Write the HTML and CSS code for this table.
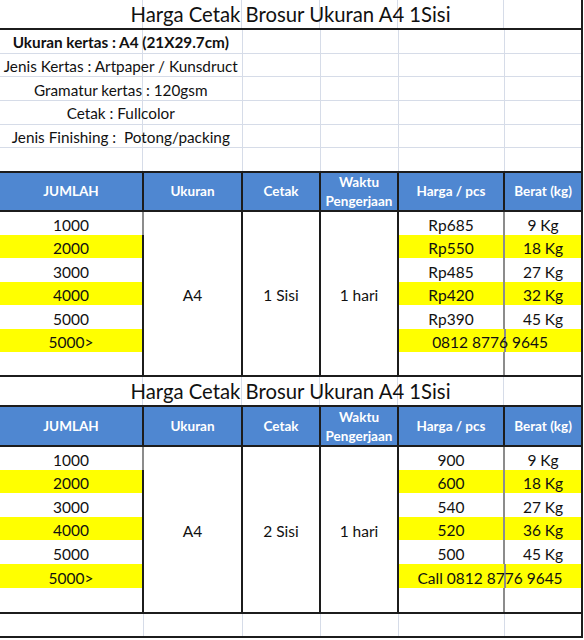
FILE: index.html
```html
<!DOCTYPE html>
<html lang="id">
<head>
<meta charset="utf-8">
<title>Harga Cetak Brosur Ukuran A4</title>
<link rel="stylesheet" href="styles.css">
</head>
<body>
<table class="sheet">
  <colgroup>
    <col class="c-qty"><col class="c-size"><col class="c-print"><col class="c-time"><col class="c-price"><col class="c-weight">
  </colgroup>
  <tbody>
    <tr><td colspan="6" class="title">Harga Cetak Brosur Ukuran A4 1Sisi</td></tr>
    <tr class="info-row"><td colspan="2" class="info strong">Ukuran kertas : A4 (21X29.7cm)</td><td class="grid"></td><td class="grid"></td><td class="grid"></td><td class="grid end"></td></tr>
    <tr class="info-row"><td colspan="2" class="info">Jenis Kertas : Artpaper / Kunsdruct</td><td class="grid"></td><td class="grid"></td><td class="grid"></td><td class="grid end"></td></tr>
    <tr class="info-row"><td colspan="2" class="info">Gramatur kertas : 120gsm</td><td class="grid"></td><td class="grid"></td><td class="grid"></td><td class="grid end"></td></tr>
    <tr class="info-row"><td colspan="2" class="info">Cetak : Fullcolor</td><td class="grid"></td><td class="grid"></td><td class="grid"></td><td class="grid end"></td></tr>
    <tr class="info-row"><td colspan="2" class="info">Jenis Finishing :&nbsp; Potong/packing</td><td class="grid"></td><td class="grid"></td><td class="grid"></td><td class="grid end"></td></tr>
    <tr class="info-row"><td colspan="2" class="info"></td><td class="grid"></td><td class="grid"></td><td class="grid"></td><td class="grid end"></td></tr>

    <tr class="head-row"><th class="first">JUMLAH</th><th>Ukuran</th><th>Cetak</th><th>Waktu<br>Pengerjaan</th><th>Harga / pcs</th><th class="end">Berat (kg)</th></tr>
    <tr class="data-row top"><td class="qty">1000</td><td rowspan="7" class="merged">A4</td><td rowspan="7" class="merged">1 Sisi</td><td rowspan="7" class="merged">1 hari</td><td class="price">Rp685</td><td class="weight">9 Kg</td></tr>
    <tr class="data-row hl"><td class="qty">2000</td><td class="price">Rp550</td><td class="weight">18 Kg</td></tr>
    <tr class="data-row"><td class="qty">3000</td><td class="price">Rp485</td><td class="weight">27 Kg</td></tr>
    <tr class="data-row hl"><td class="qty">4000</td><td class="price">Rp420</td><td class="weight">32 Kg</td></tr>
    <tr class="data-row"><td class="qty">5000</td><td class="price">Rp390</td><td class="weight">45 Kg</td></tr>
    <tr class="data-row hl"><td class="qty">5000&gt;</td><td colspan="2" class="phone">0812 8776 9645</td></tr>
    <tr class="data-row last"><td class="qty"></td><td class="price"></td><td class="weight"></td></tr>

    <tr><td colspan="6" class="title title-2">Harga Cetak Brosur Ukuran A4 1Sisi</td></tr>
    <tr class="head-row head-2"><th class="first">JUMLAH</th><th>Ukuran</th><th>Cetak</th><th>Waktu<br>Pengerjaan</th><th>Harga / pcs</th><th class="end">Berat (kg)</th></tr>
    <tr class="data-row top"><td class="qty">1000</td><td rowspan="7" class="merged">A4</td><td rowspan="7" class="merged">2 Sisi</td><td rowspan="7" class="merged">1 hari</td><td class="price">900</td><td class="weight">9 Kg</td></tr>
    <tr class="data-row hl"><td class="qty">2000</td><td class="price">600</td><td class="weight">18 Kg</td></tr>
    <tr class="data-row"><td class="qty">3000</td><td class="price">540</td><td class="weight">27 Kg</td></tr>
    <tr class="data-row hl"><td class="qty">4000</td><td class="price">520</td><td class="weight">36 Kg</td></tr>
    <tr class="data-row"><td class="qty">5000</td><td class="price">500</td><td class="weight">45 Kg</td></tr>
    <tr class="data-row hl tall"><td class="qty">5000&gt;</td><td colspan="2" class="phone">Call 0812 8776 9645</td></tr>
    <tr class="data-row last tall"><td class="qty"></td><td class="price"></td><td class="weight"></td></tr>
    <tr class="tail-row"><td></td><td class="grid"></td><td class="grid"></td><td class="grid"></td><td class="grid"></td><td class="grid end"></td></tr>
  </tbody>
</table>
</body>
</html>
```

FILE: styles.css
```css
html, body {
  margin: 0;
  padding: 0;
  background: #ffffff;
}

body {
  font-family: Lato, "Open Sans", "Liberation Sans", sans-serif;
  color: #111111;
}

.sheet {
  border-collapse: collapse;
  table-layout: fixed;
  width: 583px;
}

.c-qty { width: 143px; }
.c-size { width: 99px; }
.c-print { width: 78px; }
.c-time { width: 78px; }
.c-price { width: 106px; }
.c-weight { width: 78px; }

.sheet td,
.sheet th {
  padding: 0;
  text-align: center;
  vertical-align: middle;
  white-space: nowrap;
}

.title {
  height: 28px;
  padding-top: 4px;
  font-size: 20.3px;
  line-height: 24px;
  border-bottom: 2px solid #1c1c1c;
  border-right: 2px solid #1c1c1c;
  background:
    linear-gradient(#d6dce8, #d6dce8) 142px 0 / 1px 100% no-repeat,
    linear-gradient(#d6dce8, #d6dce8) 241px 0 / 1px 100% no-repeat,
    linear-gradient(#d6dce8, #d6dce8) 319px 0 / 1px 100% no-repeat,
    linear-gradient(#d6dce8, #d6dce8) 397px 0 / 1px 100% no-repeat,
    linear-gradient(#d6dce8, #d6dce8) 503px 0 / 1px 100% no-repeat;
}

.title-2 {
  height: 28px;
  padding-top: 4px;
}

.info-row td {
  height: 20.7px;
  padding-top: 2px;
  font-size: 15.3px;
  line-height: 18px;
  border-bottom: 1px solid #d6dce8;
}

.info {
  background: linear-gradient(#d6dce8, #d6dce8) 142px 0 / 1px 100% no-repeat;
}

.info.strong {
  font-weight: 700;
}

.grid {
  border-left: 1px solid #d6dce8;
}

.end {
  border-right: 2px solid #1c1c1c;
}

.head-row th {
  height: 37px;
  padding-top: 0;
  background: #4f87d1;
  color: #ffffff;
  font-size: 13.5px;
  font-weight: 700;
  line-height: 18.5px;
  border: 2px solid #1c1c1c;
}

.head-row.head-2 th {
  height: 37px;
  padding-top: 1px;
}

.head-row th.first {
  border-left: none;
}

.data-row td {
  height: 20.5px;
  padding-top: 3.5px;
  font-size: 15.5px;
  line-height: 18px;
}

.data-row.hl td,
.data-row.top td,
.data-row.last td {
  height: 19.5px;
}

.data-row.tall td {
  height: 20.5px;
}

.qty {
  border-right: 2px solid #8c8c8c;
}

.merged {
  border-left: 2px solid #1c1c1c;
  border-right: 2px solid #1c1c1c;
  border-bottom: 2px solid #1c1c1c;
}

.price {
  border-left: 2px solid #1c1c1c;
  border-right: 2px solid #8c8c8c;
}

.weight {
  border-right: 2px solid #1c1c1c;
}

.hl .qty,
.hl .price,
.hl .weight,
.hl .phone {
  background-color: #ffff00;
}

.phone {
  border-right: 2px solid #1c1c1c;
  background-image: linear-gradient(#8c8c8c, #8c8c8c);
  background-position: 105px 0;
  background-size: 2px 100%;
  background-repeat: no-repeat;
}

.data-row.last td {
  border-bottom: 2px solid #1c1c1c;
}

.tail-row td {
  height: 22px;
  border-bottom: 2px solid #1c1c1c;
}
```
